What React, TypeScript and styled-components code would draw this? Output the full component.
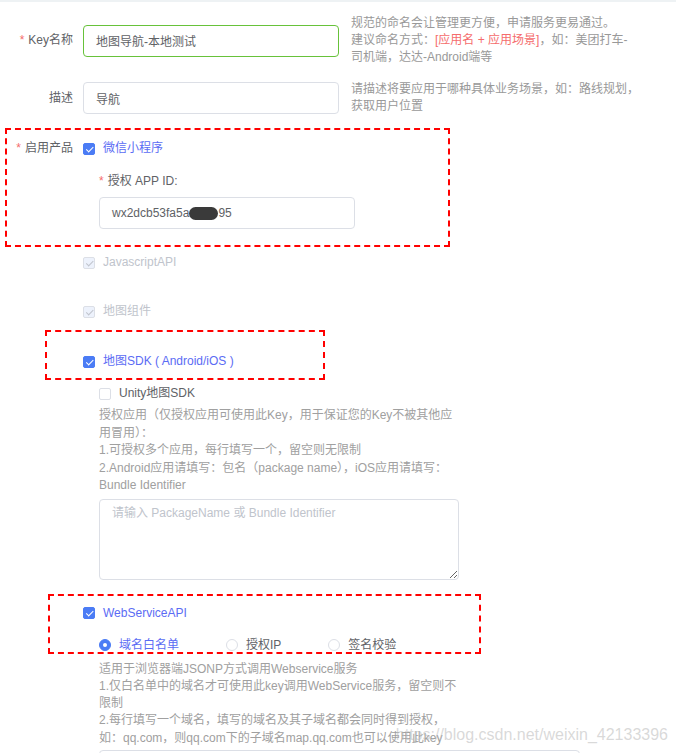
import React from "react";
import styled, { createGlobalStyle, css } from "styled-components";

// 表单数据

type CheckState = "checked" | "disabled" | "empty";

const keyHint = [
  "规范的命名会让管理更方便，申请服务更易通过。",
  "__NAMING__",
  "司机端，达达-Android端等",
];

const descHint = ["请描述将要应用于哪种具体业务场景，如：路线规划，", "获取用户位置"];

const sdkHelp = [
  "授权应用（仅授权应用可使用此Key，用于保证您的Key不被其他应",
  "用冒用）：",
  "1.可授权多个应用，每行填写一个，留空则无限制",
  "2.Android应用请填写：包名（package name），iOS应用请填写：",
  "Bundle Identifier",
];

const webHelp = [
  "适用于浏览器端JSONP方式调用Webservice服务",
  "1.仅白名单中的域名才可使用此key调用WebService服务，留空则不",
  "限制",
  "2.每行填写一个域名，填写的域名及其子域名都会同时得到授权，",
  "如：qq.com，则qq.com下的子域名map.qq.com也可以使用此key",
];

const radios = [
  { label: "域名白名单", checked: true },
  { label: "授权IP", checked: false },
  { label: "签名校验", checked: false },
];

const CheckItem: React.FC<{ state: CheckState; children: React.ReactNode }> = ({ state, children }) => (
  <CheckWrap>
    <Box $state={state} />
    <CheckText $state={state}>{children}</CheckText>
  </CheckWrap>
);

const App: React.FC = () => {
  return (
    <Page>
      <GlobalStyle />

      <Row $top={13}>
        <Label>
          <Star>*</Star>Key名称
        </Label>
        <Field $focus>地图导航-本地测试</Field>
        <Hint>
          {keyHint.map((line, i) =>
            line === "__NAMING__" ? (
              <Line key={i}>
                建议命名方式：<Accent>[应用名 + 应用场景]</Accent>，如：美团打车-
              </Line>
            ) : (
              <Line key={i}>{line}</Line>
            )
          )}
        </Hint>
      </Row>

      <Row $top={15}>
        <Label>描述</Label>
        <Field>导航</Field>
        <Hint>
          {descHint.map((line, i) => (
            <Line key={i}>{line}</Line>
          ))}
        </Hint>
      </Row>

      <Marked $top={25} $box={[-12, 5, 445, 119]}>
        <Row>
          <Label>
            <Star>*</Star>启用产品
          </Label>
          <CheckItem state="checked">微信小程序</CheckItem>
        </Row>
        <Indent>
          <SubLabel>
            <Star>*</Star>授权 APP ID:
          </SubLabel>
          <Field $mt={7}>
            wx2dcb53fa5a
            <Redact />
            95
          </Field>
        </Indent>
      </Marked>

      <OptionRow $top={25}>
        <CheckItem state="disabled">JavascriptAPI</CheckItem>
      </OptionRow>
      <OptionRow $top={32}>
        <CheckItem state="disabled">地图组件</CheckItem>
      </OptionRow>

      <Marked $top={33} $box={[-23, 45, 280, 50]}>
        <OptionRow>
          <CheckItem state="checked">地图SDK ( Android/iOS )</CheckItem>
        </OptionRow>
      </Marked>

      <Indent $top={15}>
        <CheckItem state="empty">Unity地图SDK</CheckItem>
        <Help $mt={5} $lh={17.5}>
          {sdkHelp.map((line, i) => (
            <Line key={i}>{line}</Line>
          ))}
        </Help>
        <Area $w={360} $mt={4.5} placeholder="请输入 PackageName 或 Bundle Identifier" />
      </Indent>

      <Marked $top={24.5} $box={[-10.5, 48, 433, 60]}>
        <OptionRow>
          <CheckItem state="checked">WebServiceAPI</CheckItem>
        </OptionRow>
        <RadioGroup>
          {radios.map((r) => (
            <RadioItem key={r.label}>
              <Radio $on={r.checked} />
              <RadioText $on={r.checked}>{r.label}</RadioText>
            </RadioItem>
          ))}
        </RadioGroup>
      </Marked>

      <Indent>
        <Help $mt={7} $lh={17.25}>
          {webHelp.map((line, i) => (
            <Line key={i}>{line}</Line>
          ))}
        </Help>
        <Area $w={481} $mt={3.5} />
      </Indent>

      <Watermark>https://blog.csdn.net/weixin_42133396</Watermark>
    </Page>
  );
};

// Styled-components

const GlobalStyle = createGlobalStyle`
  html, body {
    margin: 0;
    padding: 0;
    background: #fff;
  }
  body {
    font-family: "Liberation Sans", "Noto Sans CJK SC", sans-serif;
    font-size: 12px;
    color: #606266;
  }
`;

const Page = styled.div`
  position: relative;
  width: 676px;
  height: 753px;
  overflow: hidden;
  box-sizing: border-box;
  border-top: 2px solid #eef2f4;
`;

const Row = styled.div<{ $top?: number }>`
  display: flex;
  align-items: center;
  margin-top: ${(p) => p.$top ?? 0}px;
`;

const Label = styled.div`
  width: 83px;
  flex-shrink: 0;
  box-sizing: border-box;
  padding-right: 10px;
  text-align: right;
  line-height: 17px;
  color: #606266;
  white-space: nowrap;
`;

const Star = styled.span`
  color: #f56c6c;
  margin-right: 4px;
`;

const Field = styled.div<{ $focus?: boolean; $mt?: number }>`
  width: 256px;
  height: 32px;
  margin-top: ${(p) => p.$mt ?? 0}px;
  box-sizing: border-box;
  display: flex;
  align-items: center;
  padding: 0 12px;
  border: 1px solid ${(p) => (p.$focus ? "#67c23a" : "#dcdfe6")};
  border-radius: 4px;
  color: #606266;
  font-size: 12px;
  white-space: nowrap;
  flex-shrink: 0;
`;

const Redact = styled.span`
  display: inline-block;
  width: 29px;
  height: 13px;
  border-radius: 7px;
  background: #3a3a3a;
`;

const Hint = styled.div`
  margin-left: 12px;
  line-height: 17px;
  color: #999;
`;

const Line = styled.div`
  white-space: nowrap;
`;

const Accent = styled.span`
  color: #f56c6c;
`;

const Marked = styled.div<{ $top: number; $box: [number, number, number, number] }>`
  position: relative;
  margin-top: ${(p) => p.$top}px;

  &::after {
    content: "";
    position: absolute;
    top: ${(p) => p.$box[0]}px;
    left: ${(p) => p.$box[1]}px;
    width: ${(p) => p.$box[2]}px;
    height: ${(p) => p.$box[3]}px;
    box-sizing: border-box;
    border: 2px dashed #ff0000;
    pointer-events: none;
  }
`;

const Indent = styled.div<{ $top?: number }>`
  padding-left: 99px;
  margin-top: ${(p) => p.$top ?? 0}px;
`;

const SubLabel = styled.div`
  margin-top: 16px;
  line-height: 17px;
  color: #606266;
`;

const OptionRow = styled.div<{ $top?: number }>`
  padding-left: 83px;
  margin-top: ${(p) => p.$top ?? 0}px;
`;

const CheckWrap = styled.div`
  display: flex;
  align-items: center;
  gap: 8px;
  line-height: 17px;
`;

const Box = styled.span<{ $state: CheckState }>`
  position: relative;
  width: 12px;
  height: 12px;
  box-sizing: border-box;
  border-radius: 2px;
  flex-shrink: 0;
  border: 1px solid #dcdfe6;
  background: #fff;

  ${(p) =>
    p.$state === "checked" &&
    css`
      border-color: #4b7cf5;
      background: #4b7cf5;
    `}
  ${(p) =>
    p.$state === "disabled" &&
    css`
      background: #edf2fc;
    `}

  &::after {
    content: "";
    display: ${(p) => (p.$state === "empty" ? "none" : "block")};
    position: absolute;
    left: 3.5px;
    top: 1px;
    width: 2.5px;
    height: 5.5px;
    border: 1px solid ${(p) => (p.$state === "checked" ? "#fff" : "#c0c4cc")};
    border-top: 0;
    border-left: 0;
    transform: rotate(45deg);
  }
`;

const CheckText = styled.span<{ $state: CheckState }>`
  white-space: nowrap;
  color: ${(p) =>
    p.$state === "checked" ? "#5b6cf4" : p.$state === "disabled" ? "#c0c4cc" : "#606266"};
`;

const Help = styled.div<{ $mt: number; $lh: number }>`
  margin-top: ${(p) => p.$mt}px;
  line-height: ${(p) => p.$lh}px;
  color: #a0a0a0;
`;

const Area = styled.textarea<{ $w: number; $mt: number }>`
  display: block;
  width: ${(p) => p.$w}px;
  height: 81px;
  margin: ${(p) => p.$mt}px 0 0;
  box-sizing: border-box;
  padding: 5px 12px;
  border: 1px solid #dcdfe6;
  border-radius: 4px;
  font-family: inherit;
  font-size: 12px;
  line-height: 17px;
  color: #606266;
  outline: none;

  &::placeholder {
    color: #c0c4cc;
  }
`;

const RadioGroup = styled.div`
  display: flex;
  gap: 47px;
  margin-top: 15px;
  padding-left: 99px;
`;

const RadioItem = styled.div`
  display: flex;
  align-items: center;
  gap: 8px;
  line-height: 17px;
`;

const Radio = styled.span<{ $on: boolean }>`
  position: relative;
  width: 12px;
  height: 12px;
  box-sizing: border-box;
  border-radius: 50%;
  border: 1px solid ${(p) => (p.$on ? "#4b7cf5" : "#dcdfe6")};
  background: ${(p) => (p.$on ? "#4b7cf5" : "#fff")};

  &::after {
    content: "";
    display: ${(p) => (p.$on ? "block" : "none")};
    position: absolute;
    left: 3px;
    top: 3px;
    width: 4px;
    height: 4px;
    border-radius: 50%;
    background: #fff;
  }
`;

const RadioText = styled.span<{ $on: boolean }>`
  white-space: nowrap;
  color: ${(p) => (p.$on ? "#5b6cf4" : "#606266")};
`;

const Watermark = styled.div`
  position: absolute;
  right: 8px;
  bottom: 9px;
  font-family: "Liberation Sans", sans-serif;
  font-size: 16px;
  line-height: 18px;
  color: rgba(185, 185, 185, 0.55);
  pointer-events: none;
  white-space: nowrap;
`;

export default App;
